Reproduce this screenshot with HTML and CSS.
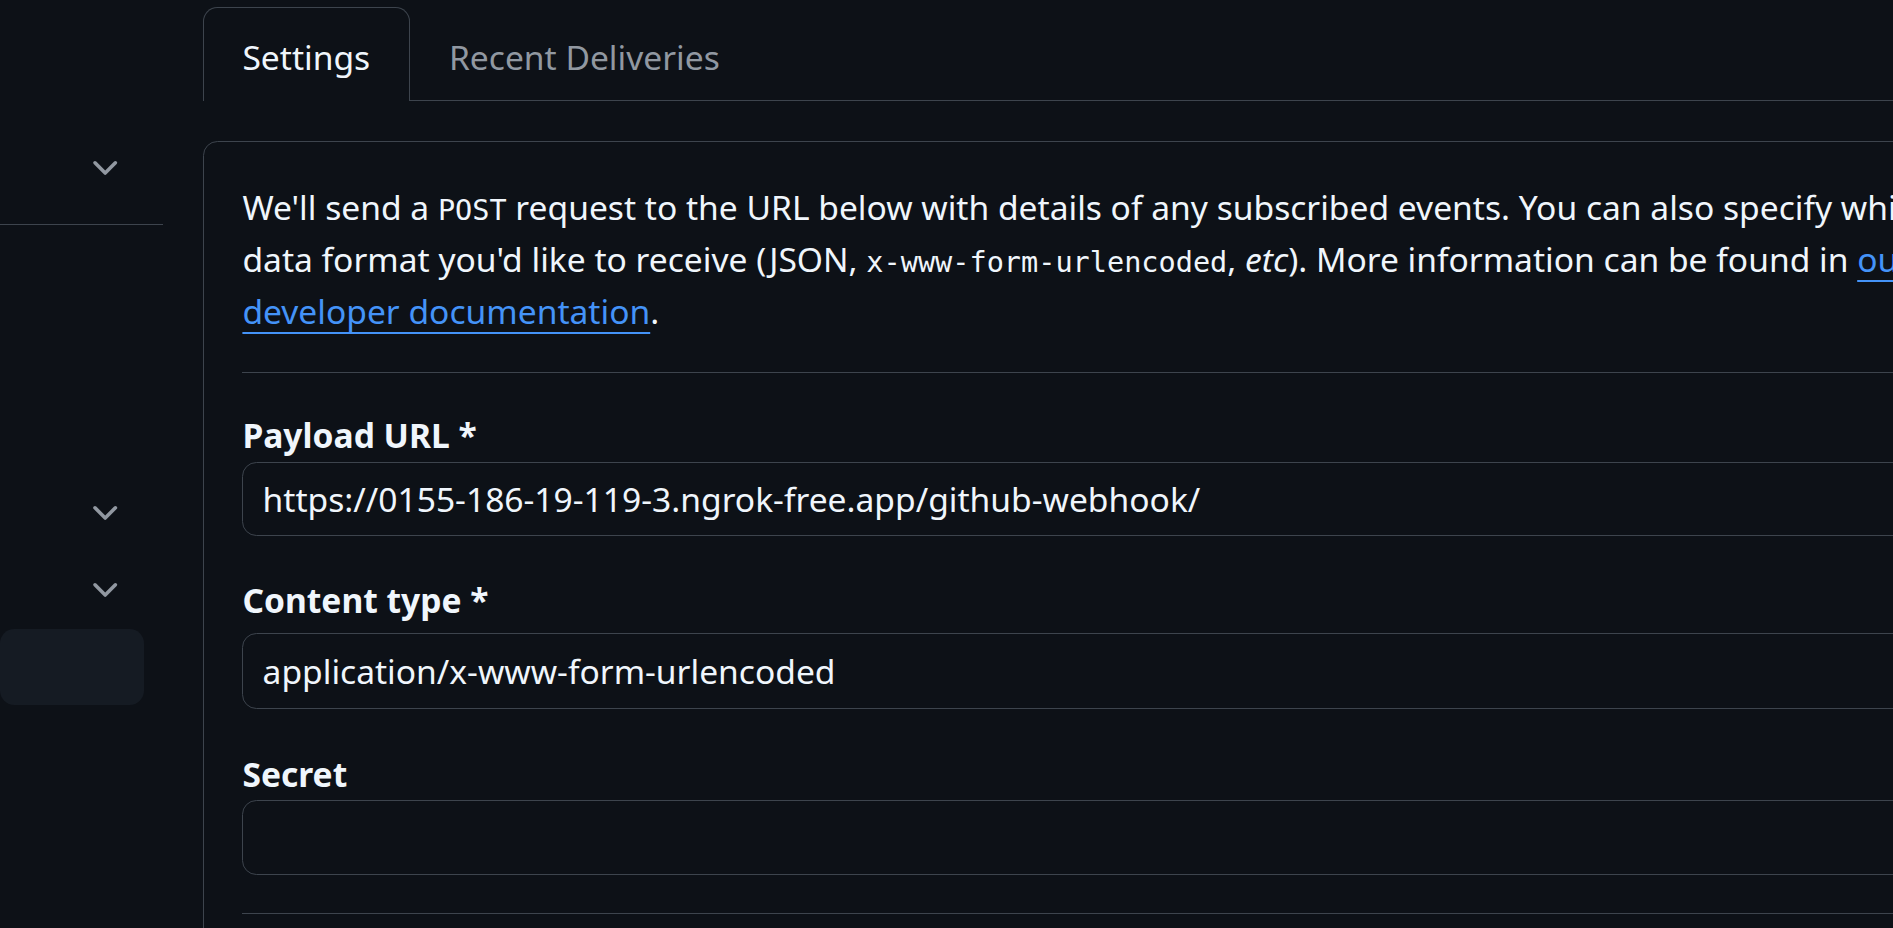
FILE: index.html
```html
<!DOCTYPE html>
<html lang="en">
<head>
<meta charset="utf-8">
<title>Webhook settings</title>
<link rel="stylesheet" href="styles.css">
</head>
<body>
<div class="page">
  <nav class="sidebar">
    <div class="nav-item"><svg class="chev" viewBox="0 0 16 16"><path d="M12.78 5.22a.749.749 0 0 1 0 1.06l-4.25 4.25a.749.749 0 0 1-1.06 0L3.22 6.28a.749.749 0 1 1 1.06-1.06L8 8.94l3.72-3.72a.749.749 0 0 1 1.06 0Z"/></svg></div>
    <div class="nav-divider"></div>
    <div class="nav-item"></div>
    <div class="nav-item"></div>
    <div class="nav-item"></div>
    <div class="nav-item"><svg class="chev" viewBox="0 0 16 16"><path d="M12.78 5.22a.749.749 0 0 1 0 1.06l-4.25 4.25a.749.749 0 0 1-1.06 0L3.22 6.28a.749.749 0 1 1 1.06-1.06L8 8.94l3.72-3.72a.749.749 0 0 1 1.06 0Z"/></svg></div>
    <div class="nav-item"><svg class="chev" viewBox="0 0 16 16"><path d="M12.78 5.22a.749.749 0 0 1 0 1.06l-4.25 4.25a.749.749 0 0 1-1.06 0L3.22 6.28a.749.749 0 1 1 1.06-1.06L8 8.94l3.72-3.72a.749.749 0 0 1 1.06 0Z"/></svg></div>
    <div class="nav-item selected"></div>
  </nav>
  <main class="main">
    <div class="tabnav">
      <a class="tab selected">Settings</a>
      <a class="tab">Recent Deliveries</a>
    </div>
    <div class="card">
      <p class="intro">We'll send a <code>POST</code> request to the URL below with details of any subscribed events. You can also specify which data format you'd like to receive (JSON, <code>x-www-form-urlencoded</code>, <em>etc</em>). More information can be found in <a class="link">our developer documentation</a>.</p>
      <hr class="rule rule-top">
      <div class="field field-url">
        <label class="label">Payload URL *</label>
        <input class="control control-url" type="text" value="https://0155-186-19-119-3.ngrok-free.app/github-webhook/">
      </div>
      <div class="field field-type">
        <label class="label label-type">Content type *</label>
        <select class="control control-select"><option>application/x-www-form-urlencoded</option></select>
      </div>
      <div class="field field-secret">
        <label class="label">Secret</label>
        <input class="control control-secret" type="text" value="">
      </div>
      <hr class="rule rule-bottom">
    </div>
  </main>
</div>
</body>
</html>
```
FILE: styles.css
```css
html, body {
  margin: 0;
  height: 100%;
  overflow: hidden;
  background: #0d1117;
}
body {
  font-family: "Noto Sans", "Liberation Sans", sans-serif;
  color: #f0f6fc;
}
.page {
  display: flex;
  align-items: flex-start;
  width: 2100px;
}
.sidebar {
  width: 163px;
  flex-shrink: 0;
  margin-right: 40px;
  padding-top: 129.6px;
}
.nav-item {
  height: 76.8px;
  margin-right: 19.2px;
  padding-right: 19.2px;
  box-sizing: border-box;
  display: flex;
  align-items: center;
  justify-content: flex-end;
  border-radius: 14.4px;
}
.nav-item.selected {
  background: #151b23;
}
.chev {
  width: 38.4px;
  height: 38.4px;
  fill: #9198a1;
}
.nav-divider {
  height: 1px;
  background: #3d444d;
  margin: 18px 0 19.2px;
}
.main {
  width: 1811px;
  flex-shrink: 0;
  padding-top: 7px;
}
.tabnav {
  display: flex;
  border-bottom: 1px solid #3d444d;
}
.tab {
  padding: 21.6px 38.4px 16.2px;
  font-size: 33.6px;
  line-height: 55.2px;
  border: 1px solid transparent;
  border-bottom: 0;
  margin-bottom: -1px;
  border-radius: 14.4px 14.4px 0 0;
  color: #9198a1;
}
.tab.selected {
  border-color: #3d444d;
  background: #0d1117;
  color: #f0f6fc;
}
.card {
  margin-top: 40.5px;
  border: 1px solid #3d444d;
  border-radius: 14.4px;
  padding: 38.4px 38.4px 60px;
}
.intro {
  margin: 0;
  font-size: 33.6px;
  line-height: 52px;
}
.intro code {
  font-family: "DejaVu Sans Mono", "Liberation Mono", monospace;
  font-size: 28.56px;
  line-height: 1;
}
.link {
  color: #4493f8;
  text-decoration: underline;
  text-decoration-thickness: 2px;
  text-underline-offset: 7.68px;
}
.rule {
  border: 0;
  height: 1px;
  background: #3d444d;
  margin: 0;
}
.rule-top {
  margin-top: 35.5px;
}
.rule-bottom {
  margin-top: 37.5px;
}
.label {
  display: block;
  font-size: 33.6px;
  line-height: 52px;
  font-weight: 700;
}
.field-url {
  margin-top: 35.6px;
}
.field-url .label {
  margin-bottom: 0.7px;
}
.field-type {
  margin-top: 38.3px;
}
.field-type .label {
  margin-bottom: 7.2px;
}
.field-secret {
  margin-top: 38.7px;
}
.control {
  display: block;
  box-sizing: border-box;
  width: 100%;
  height: 75.5px;
  margin: 0;
  padding: 0 19.2px;
  border: 1px solid #3d444d;
  border-radius: 14.4px;
  background: #0d1117;
  color: #f0f6fc;
  font-family: "Noto Sans", "Liberation Sans", sans-serif;
  font-size: 33.6px;
  outline: none;
}
.control-url {
  height: 74.3px;
}
.control-select {
  appearance: none;
  -webkit-appearance: none;
}
```
